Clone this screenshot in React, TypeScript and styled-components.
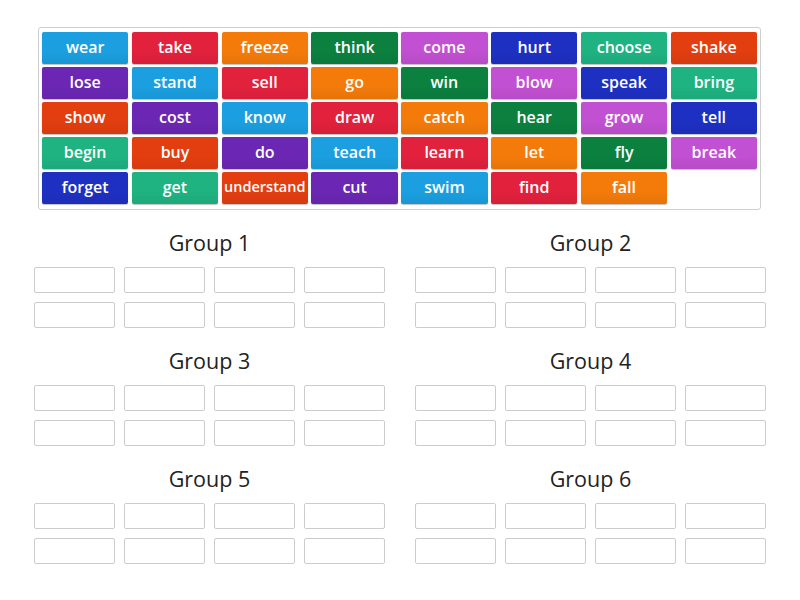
import React from 'react';
import styled, { createGlobalStyle } from 'styled-components';

const GlobalStyle = createGlobalStyle`
  html, body {
    margin: 0;
    padding: 0;
    background: #ffffff;
    font-family: 'Open Sans', 'Noto Sans', sans-serif;
  }
`;

const palette: Record<string, string> = {
  blue: '#1b9fe0',
  red: '#e2213d',
  orange: '#f47b0a',
  green: '#0b803f',
  purple: '#6b27b3',
  rust: '#e23e10',
  teal: '#1fb382',
  navy: '#1e30c2',
  pink: '#c250d2',
};

type Word = { text: string; color: string; small?: boolean };

const words: Word[] = [
  { text: 'wear', color: 'blue' },
  { text: 'take', color: 'red' },
  { text: 'freeze', color: 'orange' },
  { text: 'think', color: 'green' },
  { text: 'come', color: 'pink' },
  { text: 'hurt', color: 'navy' },
  { text: 'choose', color: 'teal' },
  { text: 'shake', color: 'rust' },
  { text: 'lose', color: 'purple' },
  { text: 'stand', color: 'blue' },
  { text: 'sell', color: 'red' },
  { text: 'go', color: 'orange' },
  { text: 'win', color: 'green' },
  { text: 'blow', color: 'pink' },
  { text: 'speak', color: 'navy' },
  { text: 'bring', color: 'teal' },
  { text: 'show', color: 'rust' },
  { text: 'cost', color: 'purple' },
  { text: 'know', color: 'blue' },
  { text: 'draw', color: 'red' },
  { text: 'catch', color: 'orange' },
  { text: 'hear', color: 'green' },
  { text: 'grow', color: 'pink' },
  { text: 'tell', color: 'navy' },
  { text: 'begin', color: 'teal' },
  { text: 'buy', color: 'rust' },
  { text: 'do', color: 'purple' },
  { text: 'teach', color: 'blue' },
  { text: 'learn', color: 'red' },
  { text: 'let', color: 'orange' },
  { text: 'fly', color: 'green' },
  { text: 'break', color: 'pink' },
  { text: 'forget', color: 'navy' },
  { text: 'get', color: 'teal' },
  { text: 'understand', color: 'rust', small: true },
  { text: 'cut', color: 'purple' },
  { text: 'swim', color: 'blue' },
  { text: 'find', color: 'red' },
  { text: 'fall', color: 'orange' },
];

const Page = styled.div`
  padding: 27px 34px 0;
`;

const WordBank = styled.div`
  width: 723px;
  box-sizing: border-box;
  margin-left: 4px;
  border: 1px solid #cfcfcf;
  border-radius: 3px;
  padding: 4px 3px 5px;
  display: grid;
  grid-template-columns: repeat(8, 1fr);
  grid-auto-rows: 31.5px;
  gap: 3.5px;
`;

const Tile = styled.div<{ $bg: string; $small?: boolean }>`
  display: flex;
  align-items: center;
  justify-content: center;
  padding-bottom: 2px;
  box-sizing: border-box;
  border-radius: 2px;
  background: linear-gradient(180deg, ${p => p.$bg} 0%, ${p => p.$bg} 60%, rgba(0, 0, 0, 0.06) 100%), ${p => p.$bg};
  box-shadow: 0 1px 1px rgba(0, 0, 0, 0.25);
  color: #ffffff;
  font-weight: 600;
  font-size: ${p => (p.$small ? '14.5px' : '16px')};
  white-space: nowrap;
  overflow: hidden;
`;

const Groups = styled.div`
  margin-top: 19px;
  display: grid;
  grid-template-columns: 351px 351px;
  column-gap: 30px;
  row-gap: 19px;
`;

const Group = styled.div`
  display: flex;
  flex-direction: column;
`;

const GroupTitle = styled.div`
  text-align: center;
  font-size: 21.5px;
  line-height: 28px;
  color: #222222;
`;

const Slots = styled.div`
  margin-top: 10px;
  display: grid;
  grid-template-columns: repeat(4, 81px);
  grid-auto-rows: 26px;
  gap: 9px;
`;

const Slot = styled.div`
  box-sizing: border-box;
  border: 1px solid #cccccc;
  border-radius: 2px;
  background: #ffffff;
`;

export default function App() {
  return (
    <Page>
      <GlobalStyle />
      <WordBank>
        {words.map(w => (
          <Tile key={w.text} $bg={palette[w.color]} $small={w.small}>
            {w.text}
          </Tile>
        ))}
      </WordBank>
      <Groups>
        {[1, 2, 3, 4, 5, 6].map(n => (
          <Group key={n}>
            <GroupTitle>Group {n}</GroupTitle>
            <Slots>
              {Array.from({ length: 8 }).map((_, i) => (
                <Slot key={i} />
              ))}
            </Slots>
          </Group>
        ))}
      </Groups>
    </Page>
  );
}
